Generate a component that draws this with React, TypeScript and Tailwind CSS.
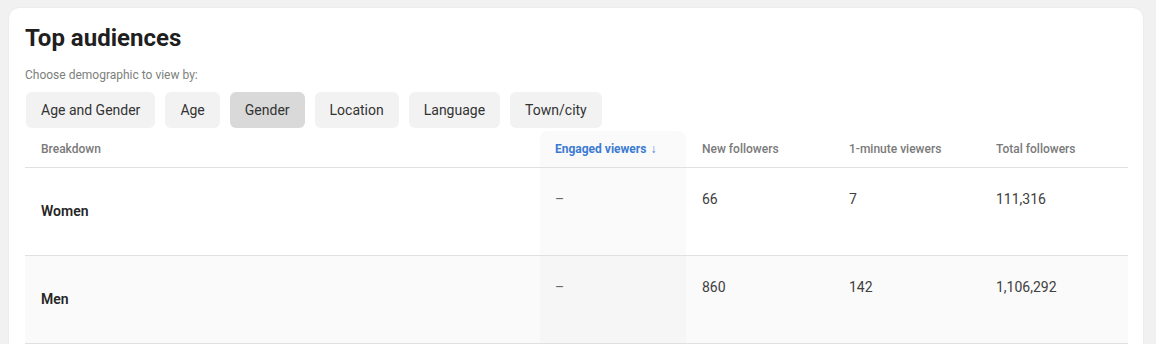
const tabs = ["Age and Gender", "Age", "Gender", "Location", "Language", "Town/city"];

const rows = [
  { label: "Women", engaged: "–", newFollowers: "66", oneMinute: "7", total: "111,316" },
  { label: "Men", engaged: "–", newFollowers: "860", oneMinute: "142", total: "1,106,292" },
];

export default function App() {
  return (
    <div className="h-[344px] overflow-hidden bg-[#f1f1f1] pl-[9px] pt-2 font-['Roboto',sans-serif]">
      <div className="w-[1134px] rounded-[10px] bg-white px-4 pt-[14px] pb-10 shadow-[0_0_2px_rgba(0,0,0,0.08)]">
        <h1 className="text-[24px] font-bold leading-8 text-[#1f1f1f]">Top audiences</h1>

        <p className="mt-[13px] text-[12px] leading-4 text-[#7d7f7c]">Choose demographic to view by:</p>

        {/* Demographic tabs */}
        <div className="mt-[9px] ml-px flex gap-[10px]">
          {tabs.map((t) => (
            <button
              key={t}
              className={
                t === "Gender"
                  ? "h-9 rounded-md bg-[#d9d9d9] px-[15px] text-[14px] text-[#333]"
                  : "h-9 rounded-md bg-[#f2f2f2] px-[15px] text-[14px] text-[#333]"
              }
            >
              {t}
            </button>
          ))}
        </div>

        {/* Table */}
        <div className="mt-[3px] grid grid-cols-[515px_146px_147px_147px_148px]">
          <div className="flex h-[37px] items-center border-b border-[#e0e0e0] pl-4 text-[12px] font-medium text-[#7a7a7a]">
            Breakdown
          </div>
          <div className="flex h-[37px] items-center rounded-t-lg border-b border-[#e0e0e0] bg-[#fafafa] pl-[15px] text-[12px] font-bold text-[#3b7ad3]">
            Engaged viewers <span className="ml-1 font-black">↓</span>
          </div>
          <div className="flex h-[37px] items-center border-b border-[#e0e0e0] pl-4 text-[12px] font-medium text-[#7a7a7a]">
            New followers
          </div>
          <div className="flex h-[37px] items-center border-b border-[#e0e0e0] pl-4 text-[12px] font-medium text-[#7a7a7a]">
            1-minute viewers
          </div>
          <div className="flex h-[37px] items-center border-b border-[#e0e0e0] pl-4 text-[12px] font-medium text-[#7a7a7a]">
            Total followers
          </div>

          {rows.map((r, i) => {
            const bg = i % 2 === 1 ? "bg-[#fafafa]" : "bg-white";
            return (
              <div key={r.label} className="contents">
                <div className={`flex h-[88px] items-center border-b border-[#e0e0e0] pl-4 text-[14px] font-semibold text-[#262626] ${bg}`}>
                  {r.label}
                </div>
                <div className={`h-[88px] border-b border-[#e0e0e0] pl-[15px] pt-[21px] text-[14px] leading-5 text-[#666] ${i % 2 === 1 ? "bg-[#f6f6f6]" : "bg-[#fafafa]"}`}>
                  {r.engaged}
                </div>
                <div className={`h-[88px] border-b border-[#e0e0e0] pl-4 pt-[21px] text-[14px] leading-5 text-[#404040] ${bg}`}>
                  {r.newFollowers}
                </div>
                <div className={`h-[88px] border-b border-[#e0e0e0] pl-4 pt-[21px] text-[14px] leading-5 text-[#404040] ${bg}`}>
                  {r.oneMinute}
                </div>
                <div className={`h-[88px] border-b border-[#e0e0e0] pl-4 pt-[21px] text-[14px] leading-5 text-[#404040] ${bg}`}>
                  {r.total}
                </div>
              </div>
            );
          })}
        </div>
      </div>
    </div>
  );
}
